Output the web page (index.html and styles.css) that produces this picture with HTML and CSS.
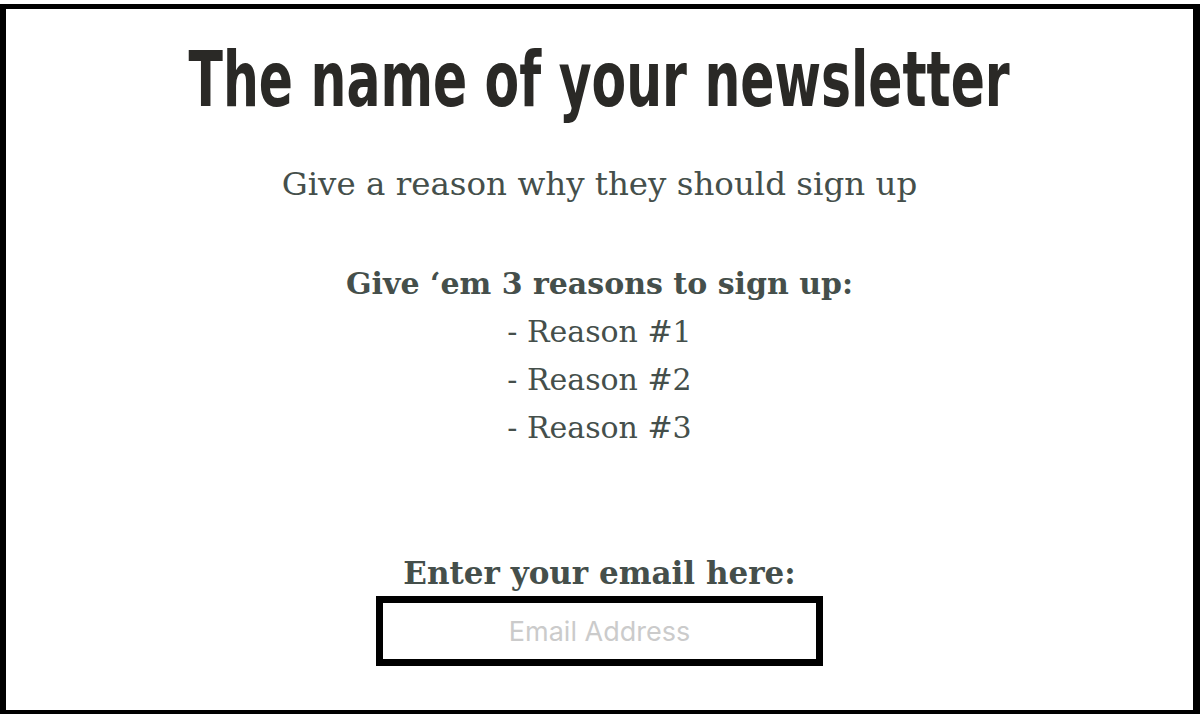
FILE: index.html
```html
<!DOCTYPE html>
<html lang="en">
<head>
    <meta charset="UTF-8">
    <meta name="viewport" content="width=device-width, initial-scale=1.0">
    <title>Newsletter Signup</title>
    <link rel="stylesheet" href="styles.css">
</head>
<body>
    <div class="signup">
        <h1 class="title"><span>The name of your newsletter</span></h1>
        <p class="pitch">Give a reason why they should sign up</p>
        <div class="reasons">
            <p class="reasons-head">Give ‘em 3 reasons to sign up:</p>
            <p>- Reason #1</p>
            <p>- Reason #2</p>
            <p>- Reason #3</p>
        </div>
        <form class="subscribe" onsubmit="return false;">
            <label for="email">Enter your email here:</label>
            <input type="email" id="email" placeholder="Email Address">
        </form>
    </div>
</body>
</html>
```
FILE: styles.css
```css
* {
    margin: 0;
    padding: 0;
    box-sizing: border-box;
}

body {
    background-color: #ffffff;
    padding-top: 4px;
    height: 714px;
    overflow: hidden;
}

.signup {
    height: 711px;
    border-style: solid;
    border-color: #000000;
    border-width: 5px 7px 5px 6px;
    display: flex;
    flex-direction: column;
    align-items: center;
    font-family: 'DejaVu Serif', serif;
    color: #454f4b;
}

.title {
    margin-top: 26px;
    font-family: 'DejaVu Sans', sans-serif;
    font-stretch: condensed;
    font-weight: 700;
    font-size: 76px;
    line-height: 90px;
    white-space: nowrap;
    color: #2a2926;
}

    /* heavy condensed headline */
    .title span {
        display: inline-block;
        transform: scaleX(0.737);
    }

.pitch {
    margin-top: 39px;
    font-size: 32.5px;
    line-height: 40px;
}

.reasons {
    margin-top: 56px;
    text-align: center;
    font-size: 30px;
    line-height: 48px;
}

.reasons-head {
    font-weight: 700;
}

.subscribe {
    margin-top: 101px;
    display: flex;
    flex-direction: column;
    align-items: center;
}

.subscribe label {
    font-size: 31px;
    line-height: 40px;
    font-weight: 700;
}

.subscribe input {
    margin-top: 3px;
    width: 447px;
    height: 70px;
    border: 7px solid #000000;
    text-align: center;
    font-family: 'Inter', sans-serif;
    font-size: 27px;
    color: #454f4b;
    outline: none;
}

    .subscribe input::placeholder {
        color: #cbcbcb;
    }
```
